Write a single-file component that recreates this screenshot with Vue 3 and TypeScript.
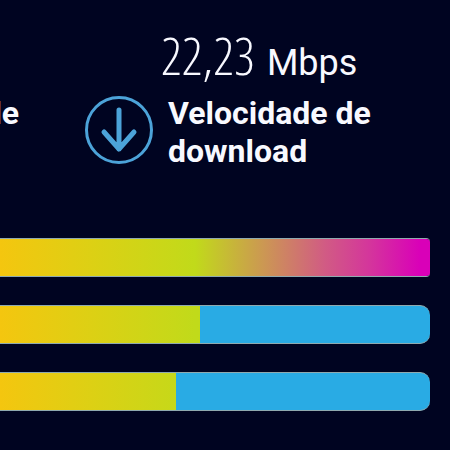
<script setup lang="ts">
interface Bar {
  id: string
  label: string
  fill: number
  full?: boolean
}

const bars: Bar[] = [
  { id: 'best', label: '100%', fill: 100, full: true },
  { id: 'second', label: '47%', fill: 46.5 },
  { id: 'third', label: '41%', fill: 41 },
]
</script>

<template>
  <main class="screen">
    <header class="metrics">
      <div class="previous">de</div>
      <svg class="icon" viewBox="0 0 70 70" aria-hidden="true">
        <circle cx="35" cy="35" r="32.5" />
        <path class="arrow" d="M35 15V54M20 37L35 54L50 37" />
      </svg>
      <section class="metric">
        <p class="reading">
          <span class="value">22,23</span>
          <span class="unit">Mbps</span>
        </p>
        <h1 class="label">Velocidade de download</h1>
      </section>
    </header>
    <div class="bars">
      <div
        v-for="bar in bars"
        :key="bar.id"
        class="bar"
        :class="{ full: bar.full }"
        role="img"
        :aria-label="bar.label"
      >
        <div class="fill" :style="{ width: bar.fill + '%' }"></div>
      </div>
    </div>
  </main>
</template>

<style>
body {
  background: #000421;
}
</style>

<style scoped>
.screen {
  min-height: 100vh;
  box-sizing: border-box;
  overflow: hidden;
  background: #000421;
  color: #f8f9ff;
  font-family: Roboto, "Liberation Sans", sans-serif;
}
.metrics {
  display: grid;
  grid-template-columns: 19px 70px 1fr;
  padding-top: 24px;
}
.previous {
  display: flex;
  justify-content: flex-end;
  overflow: hidden;
  margin-top: 70px;
  font-size: 32px;
  font-weight: 700;
  line-height: 38px;
}
.icon {
  width: 70px;
  height: 70px;
  margin: 71px 0 0 65px;
  fill: none;
  stroke: #4ca3d9;
  stroke-width: 3;
}
.arrow {
  stroke-width: 5;
  stroke-linecap: round;
  stroke-linejoin: round;
}
.metric {
  padding-left: 79px;
}
.reading {
  display: flex;
  align-items: baseline;
  gap: 12px;
  height: 70px;
  margin: 0 0 0 -7px;
  line-height: 62px;
}
.value {
  font-family: "Open Sans Condensed Light", "Open Sans Condensed", "Roboto Condensed", Roboto, sans-serif;
  font-size: 52px;
  font-weight: 100;
}
.unit {
  font-size: 36px;
}
.label {
  margin: 0;
  max-width: 240px;
  font-size: 32px;
  font-weight: 700;
  line-height: 38px;
}
.bars {
  display: grid;
  gap: 28px;
  padding: 68px 20px 0 0;
}
.bar {
  height: 39px;
  box-sizing: border-box;
  overflow: hidden;
  border: solid #8faaaf;
  border-width: 1px 0;
  border-radius: 0 10px 10px 0;
  background: #29abe4;
}
.bar.full {
  border-radius: 0 4px 4px 0;
}
.fill {
  height: 100%;
  background: linear-gradient(90deg, #f4c60f, #ddd014 90px, #c1da1a 195px);
}
.full .fill {
  background: linear-gradient(90deg, #f4c60f, #ddd014 90px, #c1da1a 195px, #cc9654 265px, #d15b84 325px, #d4359c 370px, #d900b8 420px);
}
</style>
